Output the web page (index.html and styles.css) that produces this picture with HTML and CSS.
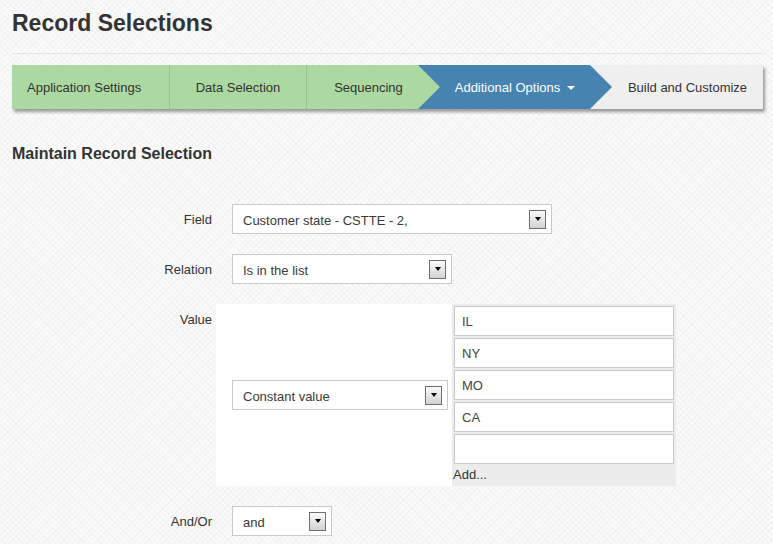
FILE: index.html
```html
<!DOCTYPE html>
<html lang="en">
<head>
<meta charset="utf-8">
<title>Record Selections</title>
<link rel="stylesheet" href="styles.css">
</head>
<body>
<div class="page">
  <h1 class="title">Record Selections</h1>
  <hr class="rule">
  <nav class="steps">
    <div class="step done first">Application Settings</div>
    <div class="step done sep">Data Selection</div>
    <div class="step done sep seq">Sequencing</div>
    <div class="step active">Additional Options<span class="caret"></span></div>
    <div class="step todo">Build and Customize</div>
  </nav>
  <h2 class="section">Maintain Record Selection</h2>
  <div class="form">
    <div class="label">Field</div>
    <div class="ctrl">
      <div class="select w-field"><span class="val">Customer state - CSTTE - 2,</span><span class="btn"></span></div>
    </div>

    <div class="label">Relation</div>
    <div class="ctrl">
      <div class="select w-rel"><span class="val">Is in the list</span><span class="btn"></span></div>
    </div>

    <div class="label label-top">Value</div>
    <div class="value-block">
      <div class="value-left">
        <div class="select w-const"><span class="val">Constant value</span><span class="btn"></span></div>
      </div>
      <div class="list-panel">
        <input class="list-input" type="text" value="IL">
        <input class="list-input" type="text" value="NY">
        <input class="list-input" type="text" value="MO">
        <input class="list-input" type="text" value="CA">
        <input class="list-input" type="text" value="">
        <div class="add">Add...</div>
      </div>
    </div>

    <div class="label">And/Or</div>
    <div class="ctrl">
      <div class="select w-and"><span class="val">and</span><span class="btn"></span></div>
    </div>
  </div>
</div>
</body>
</html>
```
FILE: styles.css
```css
html, body {
  margin: 0;
  padding: 0;
}
body {
  font-family: "Liberation Sans", Arial, sans-serif;
  font-size: 13px;
  color: #333;
  background-color: #fafafa;
  background-image:
    repeating-linear-gradient(45deg, rgba(0,0,0,0.022) 0 1px, transparent 1px 4px),
    repeating-linear-gradient(-45deg, rgba(0,0,0,0.022) 0 1px, transparent 1px 4px);
  min-height: 544px;
}
.page {
  padding: 0 10px 0 12px;
}
.title {
  margin: 0;
  padding-top: 9px;
  font-size: 23px;
  line-height: 28px;
  font-weight: bold;
  color: #333;
}
.rule {
  margin: 16px 0 0 0;
  border: 0;
  height: 1px;
  background: #e4e4e4;
}
.steps {
  margin-top: 11px;
  display: flex;
  height: 44px;
  background: #efefef;
  box-shadow: 2px 3px 3px rgba(0,0,0,0.38);
}
.step {
  line-height: 46px;
  height: 44px;
  white-space: nowrap;
  box-sizing: border-box;
  font-size: 13px;
  color: #333;
}
.done {
  background: #acd9a1;
}
.sep {
  border-left: 1px solid #95c58b;
}
.first {
  width: 157px;
  padding-left: 15px;
}
.step:nth-child(2) {
  width: 137px;
  text-align: center;
}
.seq {
  width: 112px;
  padding-left: 12px;
  text-align: center;
}
.active {
  position: relative;
  width: 172px;
  padding-left: 22px;
  text-align: center;
  background: #4683b1;
  color: #fff;
}
.active::before {
  content: "";
  position: absolute;
  left: 0;
  top: 0;
  width: 22px;
  height: 44px;
  background: #acd9a1;
  clip-path: polygon(0 0, 100% 50%, 0 100%);
}
.active::after {
  content: "";
  position: absolute;
  left: 100%;
  top: 0;
  width: 22px;
  height: 44px;
  background: #4683b1;
  clip-path: polygon(0 0, 100% 50%, 0 100%);
  z-index: 1;
}
.caret {
  display: inline-block;
  vertical-align: middle;
  margin-left: 7px;
  margin-top: -2px;
  width: 0;
  height: 0;
  border-left: 4px solid transparent;
  border-right: 4px solid transparent;
  border-top: 4px solid #fff;
}
.todo {
  flex: 1;
  padding-left: 22px;
  text-align: center;
  background: #efefef;
}
.section {
  margin: 35px 0 0 0;
  font-size: 16px;
  line-height: 20px;
  font-weight: bold;
  color: #333;
}
.form {
  margin-top: 40px;
  display: grid;
  grid-template-columns: 204px auto;
  row-gap: 20px;
  justify-content: start;
}
.label {
  text-align: right;
  padding-right: 4px;
  padding-top: 1px;
  line-height: 29px;
  height: 30px;
  box-sizing: border-box;
  color: #333;
}
.label-top {
  align-self: start;
  line-height: 16px;
  padding-top: 8px;
}
.ctrl {
  padding-left: 16px;
}
.select {
  display: flex;
  align-items: center;
  height: 30px;
  box-sizing: border-box;
  border: 1px solid #c9c9c9;
  background: #fff;
  padding: 0 5px 0 10px;
  color: #3a3a3a;
}
.select .val {
  flex: 1;
  white-space: nowrap;
  padding-top: 2px;
}
.btn {
  width: 17px;
  height: 19px;
  box-sizing: border-box;
  border: 1px solid #6e6e6e;
  background: linear-gradient(#fbfbfb, #d2d2d2);
  display: flex;
  align-items: center;
  justify-content: center;
}
.btn::after {
  content: "";
  width: 0;
  height: 0;
  border-left: 3px solid transparent;
  border-right: 3px solid transparent;
  border-top: 4px solid #000;
}
.w-field { width: 320px; }
.w-rel { width: 220px; }
.w-const { width: 216px; }
.w-and { width: 100px; }
.value-block {
  display: flex;
}
.value-left {
  width: 236px;
  box-sizing: border-box;
  padding-left: 16px;
  background: #fff;
  display: flex;
  align-items: center;
}
.list-panel {
  width: 224px;
  box-sizing: border-box;
  padding: 2px 2px 2px 2px;
  background: #ececec;
}
.list-input {
  display: block;
  width: 220px;
  height: 30px;
  box-sizing: border-box;
  margin: 0 0 2px 0;
  padding: 0 7px;
  border: 1px solid #c9c9c9;
  background: #fff;
  font-family: "Liberation Sans", Arial, sans-serif;
  font-size: 13px;
  color: #444;
  outline: none;
}
.add {
  line-height: 18px;
  margin-left: -1px;
  color: #333;
}
```
